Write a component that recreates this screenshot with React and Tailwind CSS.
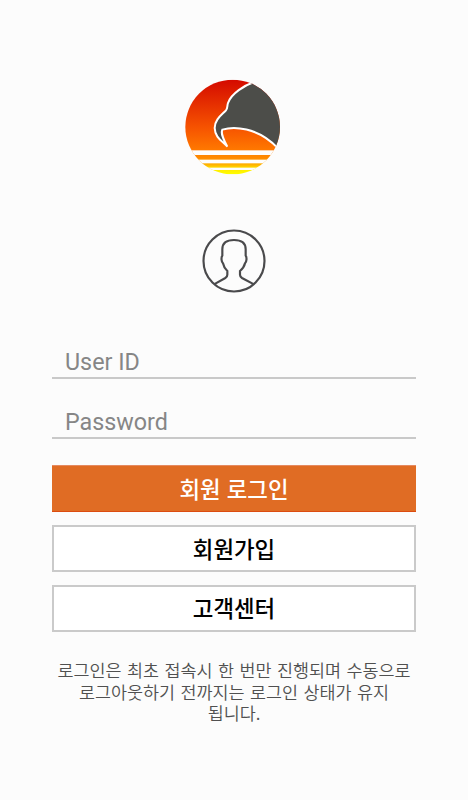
import React from "react";

function Logo() {
  return (
    <svg className="h-[114px] w-[114px]" viewBox="0 0 342 342">
      <defs>
        <linearGradient id="sun" x1="0" y1="0" x2="0" y2="1">
          <stop offset="0" stopColor="#d40a00" />
          <stop offset="0.5" stopColor="#f65200" />
          <stop offset="0.74" stopColor="#ff7800" />
          <stop offset="0.83" stopColor="#ff8c00" />
          <stop offset="0.9" stopColor="#ffb400" />
          <stop offset="0.94" stopColor="#ffe800" />
          <stop offset="1" stopColor="#ffff00" />
        </linearGradient>
        <clipPath id="disc">
          <circle cx="170" cy="171" r="142" />
        </clipPath>
      </defs>
      <g clipPath="url(#disc)">
        <rect x="27" y="29" width="286" height="284" fill="url(#sun)" />
        {/* eagle head */}
        <path
          d="M234 36C206 46 166 70 156 99C153 108 155 116 150 121C138 134 116 148 116 174C117 203 139 213 154 230C144 211 133 191 139 179C172 169 244 170 304 233L345 233V20Z"
          fill="#4c4d49"
        />
        <path
          d="M234 36C206 46 166 70 156 99C153 108 155 116 150 121C138 134 116 148 116 174C117 203 139 213 154 230C144 211 133 191 139 179C172 169 244 170 304 233"
          fill="none"
          stroke="#fff"
          strokeWidth="6"
        />
        <rect x="20" y="241" width="302" height="14" fill="#fdfdfd" />
        <rect x="20" y="269" width="302" height="11" fill="#fdfdfd" />
        <rect x="20" y="293" width="302" height="7" fill="#fdfdfd" />
      </g>
    </svg>
  );
}

function Avatar() {
  return (
    <svg
      className="h-[76px] w-[76px]"
      viewBox="0 0 228 228"
      fill="none"
      stroke="#4a4a4c"
      strokeWidth="6.5"
    >
      <circle cx="114" cy="111" r="91.5" />
      <path d="M54 181L88 162Q94 158 94 152V141C87 135 83 128 81 118C76 114 75 100 79 95V76C79 56 91 48 114 48C137 48 149 56 149 76V95C153 100 152 114 147 118C145 128 139 135 132 141V152Q132 158 138 162L174 181" />
    </svg>
  );
}

function Field({ type, placeholder }) {
  return (
    <input
      type={type}
      placeholder={placeholder}
      className="block h-[39px] w-full border-b-2 border-[#c9c9c9] bg-transparent px-[13px] pt-[7px] font-[Roboto,sans-serif] text-[23.3px] leading-[28px] outline-none placeholder:text-[#868686]"
    />
  );
}

export default function App() {
  return (
    <div className="flex h-[800px] w-[468px] flex-col items-center bg-[#fcfcfc] px-[52px] pt-[70px] font-['Noto_Sans_CJK_KR',sans-serif]">
      <div className="-ml-[2px]">
        <Logo />
      </div>
      <div className="mt-10">
        <Avatar />
      </div>

      <form className="mt-10 w-full">
        <div className="flex flex-col gap-[21px]">
          <Field type="text" placeholder="User ID" />
          <Field type="password" placeholder="Password" />
        </div>

        <div className="mt-[26px] flex flex-col gap-[13px] text-[22.4px] font-medium">
          <button
            type="button"
            className="h-[47px] border-y border-t-[#e58a60] border-b-[#dc4c10] bg-[#e06c24] text-white [word-spacing:1px]"
          >
            회원 로그인
          </button>
          <button
            type="button"
            className="h-[47px] border-2 border-[#cacaca] bg-white text-black"
          >
            회원가입
          </button>
          <button
            type="button"
            className="h-[47px] border-2 border-[#cacaca] bg-white pb-[2px] text-black"
          >
            고객센터
          </button>
        </div>
      </form>

      <p className="mt-[27px] text-center text-[17.4px] leading-[21.5px] font-[350] whitespace-nowrap text-[#505050] [word-spacing:1.6px]">
        로그인은 최초 접속시 한 번만 진행되며 수동으로
        <br />
        로그아웃하기 전까지는 로그인 상태가 유지
        <br />
        됩니다.
      </p>
    </div>
  );
}
